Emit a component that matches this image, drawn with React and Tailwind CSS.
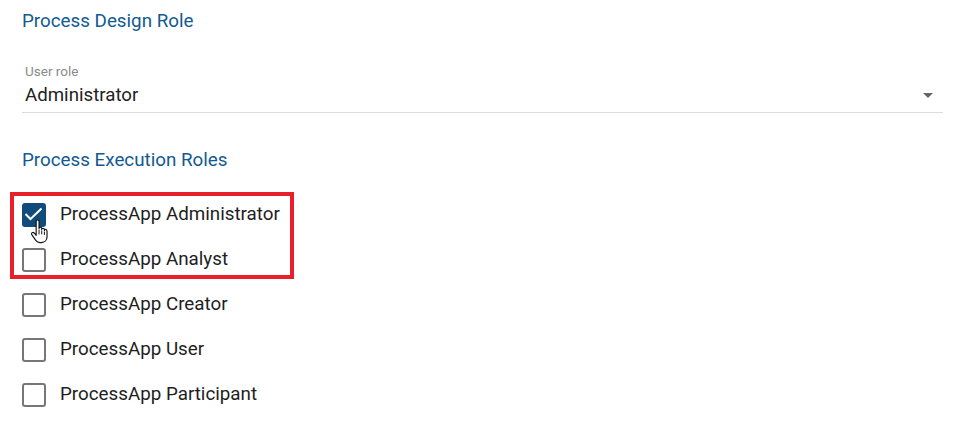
import { useState } from 'react';

const roles = [
    'ProcessApp Administrator',
    'ProcessApp Analyst',
    'ProcessApp Creator',
    'ProcessApp User',
    'ProcessApp Participant',
];

function HandCursor() {
    return (
        <svg className="absolute left-[8px] top-[27px]" width="20" height="25" viewBox="0 0 20 26">
            <path
                d="M6 2.5c0-1 .7-1.6 1.5-1.6S9 1.5 9 2.5V10c0-.8.6-1.4 1.4-1.4s1.4.6 1.4 1.4v1c0-.8.6-1.4 1.4-1.4s1.4.6 1.4 1.4v1c0-.8.6-1.3 1.3-1.3S17.3 12.2 17.3 13v5.5c0 3.5-2.4 6-5.8 6H10c-2 0-3.3-.8-4.4-2.3L1.6 16.5c-.6-.8-.4-1.8.3-2.3.7-.5 1.6-.3 2.2.4L6 17V2.5z"
                fill="#fff"
                stroke="#111"
                strokeWidth="1.2"
                strokeLinejoin="round"
            />
            <path d="M9 11v5M11.8 12v4M14.6 13v3.5" stroke="#111" strokeWidth="1" />
        </svg>
    );
}

function Checkbox({ checked, label, cursor }) {
    return (
        <label className="relative flex h-[45px] items-center cursor-pointer">
            {checked ? (
                <span className="h-[24px] w-[24px] rounded-[3px] bg-[#0f4c7c]">
                    <svg width="24" height="24" viewBox="0 0 24 24" fill="none">
                        <path d="M3.5 11l5 5L19.5 5.5" stroke="#fff" strokeWidth="2" />
                    </svg>
                </span>
            ) : (
                <span className="h-[24px] w-[24px] rounded-[3px] border-2 border-[#777]" />
            )}
            <span className="ml-[14px] text-[18.8px] text-[#1e1e1e]">{label}</span>
            {cursor && <HandCursor />}
        </label>
    );
}

export default function App() {
    const [checked] = useState([true, false, false, false, false]);

    return (
        <div className="h-[428px] w-[960px] bg-white px-[22px] font-['Roboto',sans-serif] overflow-hidden">
            <h2 className="pt-[9px] text-[18.8px] leading-[24px] text-[#135a91]">Process Design Role</h2>

            {/* Select field */}
            <div className="mt-[30px] mr-[-5px] border-b border-[#dcdcdc] pb-[5px] pl-[3px]">
                <div className="text-[13.5px] leading-[16px] text-[#8a8a8a]">User role</div>
                <div className="mt-[4px] flex items-center justify-between">
                    <span className="text-[18.7px] leading-[24px] text-[#222]">Administrator</span>
                    <svg width="10" height="5" viewBox="0 0 10 5" className="mr-[10px]">
                        <path d="M0 0h10L5 5z" fill="#666" />
                    </svg>
                </div>
            </div>

            <h2 className="mt-[35px] text-[18.8px] leading-[24px] text-[#135a91]">Process Execution Roles</h2>

            <div className="relative mt-[20px] flex flex-col">
                {/* Highlight annotation */}
                <div className="pointer-events-none absolute left-[-12px] top-[0px] h-[87px] w-[284px] border-4 border-[#e8202a]" />
                {roles.map((r, i) => (
                    <Checkbox key={r} label={r} checked={checked[i]} cursor={i === 0} />
                ))}
            </div>
        </div>
    );
}
